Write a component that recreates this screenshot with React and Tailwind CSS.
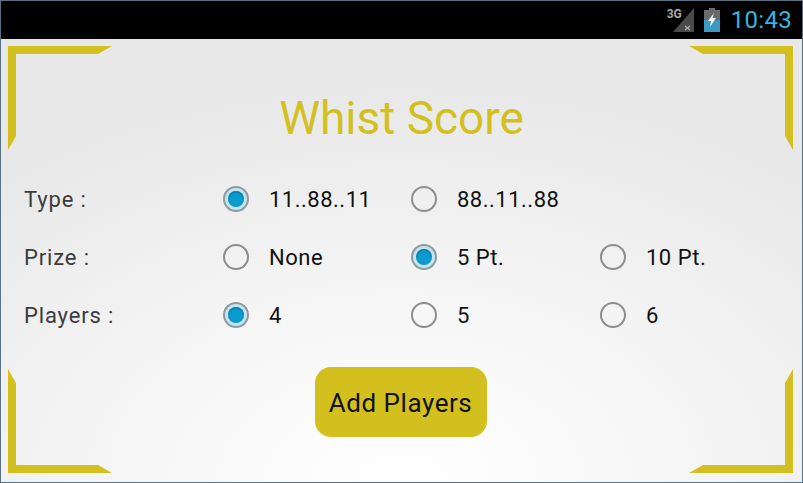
const rows = [
  { label: "Type :", options: ["11..88..11", "88..11..88"], selected: 0 },
  { label: "Prize :", options: ["None", "5 Pt.", "10 Pt."], selected: 1 },
  { label: "Players :", options: ["4", "5", "6"], selected: 0 },
];

function Radio({ checked }) {
  if (checked) {
    return (
      <span className="flex h-[26px] w-[26px] shrink-0 items-center justify-center rounded-full border-2 border-[#8f9a9e] bg-[#c4e4ef]">
        <span className="h-[16px] w-[16px] rounded-full bg-[#0a9bd0] shadow-[inset_0_1px_2px_rgba(0,60,90,0.5)]" />
      </span>
    );
  }
  return <span className="h-[26px] w-[26px] shrink-0 rounded-full border-2 border-[#8e8e8e]" />;
}

function Corner({ className, points }) {
  return (
    <svg className={`absolute h-[104px] w-[104px] ${className}`} viewBox="0 0 104 104">
      <polygon points={points} fill="#d3c01e" />
    </svg>
  );
}

function StatusBar() {
  return (
    <div className="flex h-[38px] shrink-0 items-center justify-end bg-black pr-[10px]">
      <div className="relative mr-[10px] h-[24px] w-[27px]">
        <svg className="absolute left-[6px] top-0" width="21" height="24" viewBox="0 0 21 24">
          <polygon points="0,24 21,0 21,24" fill="#4a4a4a" />
          <path d="M12 18l5 4M17 18l-5 4" stroke="#b4b4b4" strokeWidth="1.2" />
        </svg>
        <span className="absolute left-0 top-0 text-[12px] font-bold leading-[12px] text-[#a8a8a8]">3G</span>
      </div>
      <svg className="mr-[11px]" width="16" height="24" viewBox="0 0 16 24">
        <rect x="5" y="0" width="6" height="2" fill="#6a6a6a" />
        <rect x="0" y="2" width="16" height="10" fill="#6a6a6a" />
        <rect x="0" y="12" width="16" height="12" fill="#3a9ac4" />
        <polygon points="10,5 4,13 7,13 6,19 12,10 8.5,10" fill="#f2f2f2" />
      </svg>
      <span className="text-[24px] font-normal leading-none tracking-[0.3px] text-[#33b5e5]">10:43</span>
    </div>
  );
}

export default function App() {
  return (
    <div className="flex h-[483px] w-[803px] flex-col overflow-hidden border border-[#5b7083] [font-family:'Roboto',sans-serif]">
      <StatusBar />
      <main className="relative flex-1 bg-[radial-gradient(ellipse_620px_400px_at_50%_100%,#ffffff_0%,#f6f6f6_45%,#e8e8e8_100%)] px-[23px]">
        <Corner className="left-[7px] top-[7px]" points="0,0 104,0 90,8 8,8 8,90 0,104" />
        <Corner className="right-[9px] top-[7px]" points="104,0 0,0 14,8 96,8 96,90 104,104" />
        <Corner className="bottom-[9px] left-[7px]" points="0,104 104,104 90,96 8,96 8,14 0,0" />
        <Corner className="bottom-[9px] right-[9px]" points="104,104 0,104 14,96 96,96 96,14 104,0" />

        <h1 className="pt-[51px] text-center text-[46px] font-normal leading-[56px] text-[#d3c01e]">Whist Score</h1>

        <div className="mt-[36px] flex flex-col gap-[26px]">
          {rows.map((row) => (
            <div key={row.label} className="grid h-[32px] grid-cols-[199px_188px_189px_1fr] items-center">
              <span className="pt-[1px] text-[22px] tracking-[0.85px] text-[#3c3c3c]">{row.label}</span>
              {row.options.map((opt, i) => (
                <div key={opt} className="flex items-center gap-[20px]">
                  <Radio checked={i === row.selected} />
                  <span className="pt-[1px] text-[22px] tracking-[0.5px] text-[#111111]">{opt}</span>
                </div>
              ))}
            </div>
          ))}
        </div>

        <div className="mt-[37px] flex justify-center pr-[2px]">
          <button className="h-[70px] w-[172px] rounded-[16px] bg-[#d3c01e] pt-[2px] text-[26px] tracking-[0.55px] text-[#111111]">Add Players</button>
        </div>
      </main>
    </div>
  );
}
